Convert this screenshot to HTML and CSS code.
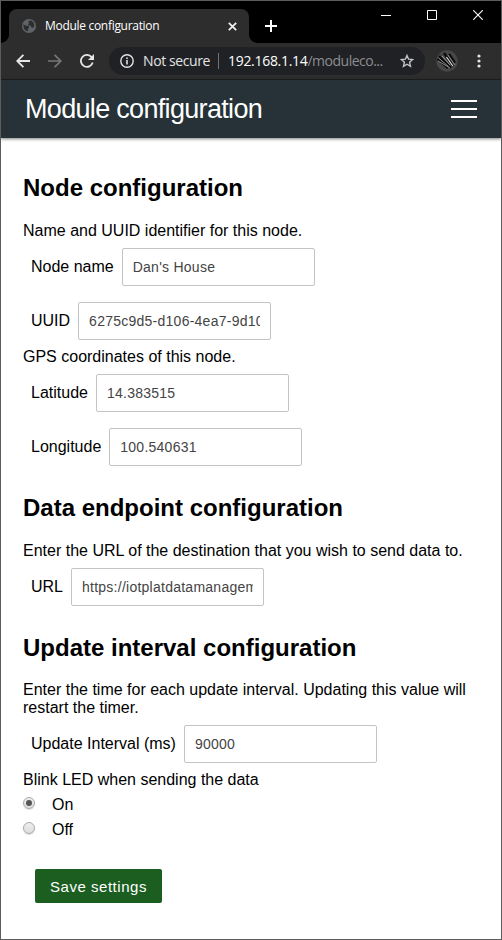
FILE: index.html
```
<!DOCTYPE html>
<html lang="en">
<head>
<meta charset="utf-8">
<title>Module configuration</title>
<link rel="stylesheet" href="styles.css">
</head>
<body>
<div class="window">
  <div class="tabstrip">
    <div class="tab">
      <svg class="globe" width="14" height="14" viewBox="0 0 14 14"><circle cx="7" cy="7" r="7" fill="#606468"/><path d="M1.4 5.2 4 6.7l2.3.1 1 1.5-1.2 1.3v2.6C3.4 12 1.2 9.8 1.4 5.2ZM6.2 2.1l3-.7 2.4 2 .8 3.7-1.6 2-1.4-.5-.5-1.8-2.1-.3-.9-1.4 1.3-1.1Z" fill="#2d2d2d"/></svg>
      <span class="tab-title">Module configuration</span>
      <svg class="tab-close" width="9" height="9" viewBox="0 0 9 9"><path d="m.8.8 7.4 7.4m0-7.4L.8 8.2" stroke="#f1f1f1" stroke-width="1.7"/></svg>
    </div>
    <svg class="newtab" width="12" height="12" viewBox="0 0 12 12"><path d="M6 0v12M0 6h12" stroke="#fff" stroke-width="2"/></svg>
    <div class="controls">
      <svg width="10" height="10" viewBox="0 0 10 10"><path d="M0 5.5h10" stroke="#fff"/></svg>
      <svg width="10" height="10" viewBox="0 0 10 10"><path d="M.5.5h9v9h-9z" fill="none" stroke="#fff"/></svg>
      <svg width="10" height="10" viewBox="0 0 10 10"><path d="m.2.2 9.6 9.6m0-9.6L.2 9.8" stroke="#fff" stroke-width="1.1"/></svg>
    </div>
  </div>
  <div class="toolbar">
    <svg class="back" width="14" height="14" viewBox="0 0 14 14"><path d="M14 7H1.4M7.4.8 1.2 7l6.2 6.2" fill="none" stroke="#e6e6e6" stroke-width="1.8"/></svg>
    <svg class="forward" width="14" height="14" viewBox="0 0 14 14"><path d="M0 7h12.6M6.6.8 12.8 7l-6.2 6.2" fill="none" stroke="#777" stroke-width="1.7"/></svg>
    <svg class="reload" width="14" height="14" viewBox="0 0 14 14"><path d="M12.7 8.5A6 6 0 1 1 11.4 2.9L12 3.5" fill="none" stroke="#e6e6e6" stroke-width="1.8"/><path d="M14 0v6H8z" fill="#e6e6e6"/></svg>
    <div class="address">
      <svg class="info" width="14" height="14" viewBox="0 0 14 14"><circle cx="7" cy="7" r="6.2" fill="none" stroke="#e2e2e2" stroke-width="1.4"/><path d="M7 6v4.6M7 3.4v1.5" stroke="#e2e2e2" stroke-width="1.6"/></svg>
      <span class="insecure">Not secure</span>
      <span class="divider"></span>
      <span class="host">192.168.1.14</span><span class="path">/moduleco...</span>
      <svg class="star" width="14" height="14" viewBox="0 0 14 14"><path d="m7 1.5 1.6 3.7 4 .4-3 2.7.9 4L7 10.2l-3.5 2.1.9-4-3-2.7 4-.4Z" fill="none" stroke="#c5c5c5" stroke-width="1.4"/></svg>
    </div>
    <svg class="avatar" width="22" height="22" viewBox="0 0 22 22"><circle cx="11" cy="11" r="10.7" fill="#474747"/><path d="M1.5 9 12 18M3 6l12 12M8 3l9 13M13 4l6 9" stroke="#0c0c0c" stroke-width="2.4"/><path d="m2 11 12 7M2.5 8l10 8.500M6 6l8 9M12 5l7 10" stroke="#aaa" stroke-width=".8"/><path d="m10.500 7 6.300 9" stroke="#e8e8e8" stroke-width="1.1"/></svg>
    <svg class="menu-dots" width="4" height="14" viewBox="0 0 4 14" fill="#e4e4e4"><circle cx="2" cy="2" r="1.6"/><circle cx="2" cy="7" r="1.6"/><circle cx="2" cy="12" r="1.6"/></svg>
  </div>
  <header class="appbar">
    <span class="app-title">Module configuration</span>
    <span class="hamburger"><i></i><i></i><i></i></span>
  </header>
  <main class="content">
    <section>
      <h2 class="h-node">Node configuration</h2>
      <p>Name and UUID identifier for this node.</p>
      <div class="field"><label for="name">Node name</label><input id="name" value="Dan's House"></div>
      <div class="field"><label for="uuid">UUID</label><input id="uuid" value="6275c9d5-d106-4ea7-9d10-"></div>
      <p class="follow">GPS coordinates of this node.</p>
      <div class="field"><label for="lat">Latitude</label><input id="lat" value="14.383515"></div>
      <div class="field"><label for="lon">Longitude</label><input id="lon" value="100.540631"></div>
    </section>
    <section>
      <h2 class="h-data">Data endpoint configuration</h2>
      <p>Enter the URL of the destination that you wish to send data to.</p>
      <div class="field"><label for="url">URL</label><input id="url" value="https://iotplatdatamanagement"></div>
    </section>
    <section>
      <h2 class="h-update">Update interval configuration</h2>
      <p>Enter the time for each update interval. Updating this value will<br>restart the timer.</p>
      <div class="field"><label for="interval">Update Interval (ms)</label><input id="interval" value="90000"></div>
      <p class="follow">Blink LED when sending the data</p>
      <label class="option"><span class="radio checked"></span>On</label>
      <label class="option"><span class="radio"></span>Off</label>
    </section>
    <button class="save">Save settings</button>
  </main>
</div>
</body>
</html>
```
FILE: styles.css
```
* { box-sizing: border-box; }
body { margin: 0; font: 16px/18px "Liberation Sans", Arial, sans-serif; color: #000; }
svg { display: block; flex: none; }
.window { width: 502px; height: 940px; border: 1px solid #5c5c5c; background: #fff; overflow: hidden; }
.tabstrip { height: 42px; background: #000; display: flex; align-items: flex-start; }
.tab { position: relative; width: 240px; height: 34px; margin: 8px 0 0 8px; padding: 0 12px 0 13px; background: #2d2d2d; border-radius: 8px 8px 0 0; display: flex; align-items: center; }
.tab::before, .tab::after { content: ""; position: absolute; bottom: 0; width: 8px; height: 8px; }
.tab::before { left: -8px; background: radial-gradient(circle at 0 0, #000 7.5px, #2d2d2d 8px); }
.tab::after { right: -8px; background: radial-gradient(circle at 100% 0, #000 7.5px, #2d2d2d 8px); }
.tab-title { margin-left: 9px; font: 12px/16px "Open Sans", sans-serif; letter-spacing: -.3px; color: #fff; white-space: nowrap; }
.tab-close { margin-left: auto; }
.newtab { margin: 19px 0 0 16px; }
.controls { margin: 9px 18px 0 auto; display: flex; gap: 36px; }
.toolbar { height: 37px; background: #2d2d2d; border-bottom: 1px solid #1c1e1f; display: flex; align-items: center; padding-left: 15px; }
.forward { margin-left: 18px; }
.reload { margin-left: 18px; }
.address { width: 316px; height: 28px; margin-left: 15px; padding: 0 11px; border-radius: 14px; background: #202124; display: flex; align-items: center; font: 14px/20px "Open Sans", sans-serif; white-space: nowrap; }
.insecure { margin-left: 9px; width: 67px; letter-spacing: -.4px; color: #e4e4e4; }
.divider { width: 1px; height: 16px; margin: 0 9px 0 8px; background: #727476; }
.host { letter-spacing: -.3px; color: #fff; }
.path { letter-spacing: -.5px; color: #8b8d90; }
.star { margin-left: auto; }
.avatar { margin-left: 11px; }
.menu-dots { margin-left: 19px; }
.appbar { height: 58px; background: #263238; box-shadow: 0 1px 3px rgba(0,0,0,.5); display: flex; justify-content: space-between; padding: 0 24px; color: #fff; }
.app-title { font-size: 27px; line-height: 58px; letter-spacing: -.68px; white-space: nowrap; }
.hamburger { width: 26px; margin-top: 20px; display: flex; flex-direction: column; gap: 6px; }
.hamburger i { height: 2px; background: #fff; }
.content { padding: 36px 22px 0; }
h2 { margin: 0 0 21px; font-size: 24px; line-height: 27px; white-space: nowrap; }
p { margin: 0 0 8px; white-space: nowrap; }
.field { display: flex; align-items: center; margin-left: 8px; height: 38px; }
.field + .field { margin-top: 16px; }
.field label { margin-right: 8px; white-space: nowrap; }
.field input { width: 193px; height: 38px; padding: 0 10px; border: 1px solid #c4c4c4; border-radius: 2px; background: #fff; color: #444; font: 14px "Liberation Sans", Arial, sans-serif; letter-spacing: .25px; }
.follow { margin: 8px 0 7px; }
.follow + .field { margin-top: 8px; }
section + section { margin-top: 28px; }
.h-update { margin-bottom: 20px; }
.option { display: flex; height: 18px; margin-bottom: 7px; }
.follow + .field { margin-top: 8px; }
.radio { width: 12px; height: 12px; margin: 1px 17px 0 0; border: 1px solid #aaa; border-radius: 50%; background: linear-gradient(#eee, #ddd); box-shadow: 0 1px 1px #ddd; display: flex; align-items: center; justify-content: center; }
.checked::after { content: ""; width: 6px; height: 6px; border-radius: 50%; background: #555; }
.save { display: block; width: 127px; height: 34px; margin: 30px 0 0 12px; padding: 0; border: 0; border-radius: 2px; background: #1b5e20; color: #fff; font: 15px "Liberation Sans", Arial, sans-serif; letter-spacing: .53px; white-space: nowrap; }
```
